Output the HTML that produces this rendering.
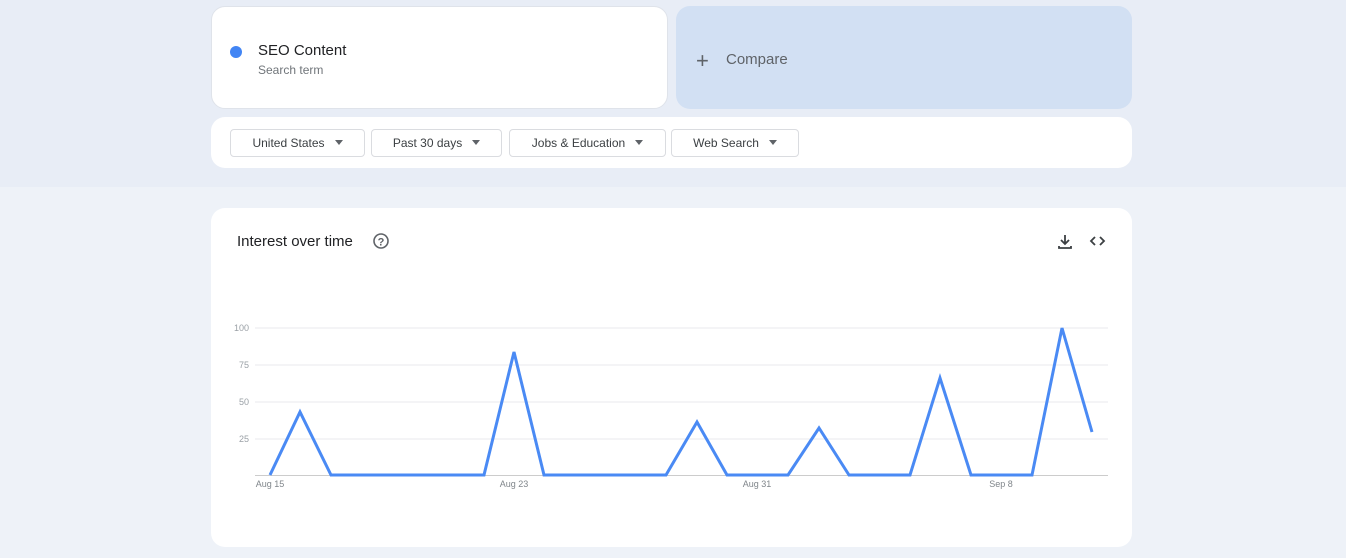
<!DOCTYPE html>
<html><head><style>
body{margin:0;width:1346px;height:558px;background:#eef2f8;font-family:"Liberation Sans",sans-serif;position:relative;overflow:hidden}
.top{position:absolute;left:0;top:0;width:1346px;height:187px;background:#e8edf6}
.card{position:absolute;background:#fff;border-radius:14px}
.btn{position:absolute;top:129px;height:26px;border:1px solid #dadce0;border-radius:4px;background:#fff;font-size:12px;color:#3c4043;line-height:26px;text-align:center}
.btn span{display:inline-block;width:0;height:0;border-left:4px solid transparent;border-right:4px solid transparent;border-top:5px solid #5f6368;margin-left:10px;vertical-align:2px}
</style></head><body>
<div class="top"></div>
<div class="card" style="left:211px;top:6px;width:457px;height:103px;border:1px solid #dfe3ea;box-sizing:border-box"></div>
<div style="position:absolute;left:230px;top:46px;width:12px;height:12px;border-radius:50%;background:#4285f4"></div>
<div style="position:absolute;left:258px;top:42px;font-size:15px;color:#202124">SEO Content</div>
<div style="position:absolute;left:258px;top:63px;font-size:12px;color:#70757a">Search term</div>
<div style="position:absolute;left:676px;top:6px;width:456px;height:103px;border-radius:14px;background:#d2e0f3"></div>
<div style="position:absolute;left:696px;top:48px;font-size:22px;color:#5f6368;font-weight:300">+</div>
<div style="position:absolute;left:726px;top:51px;font-size:15px;color:#5f6368">Compare</div>
<div class="card" style="left:211px;top:117px;width:921px;height:51px"></div>
<div class="btn" style="left:230px;width:133px">United States<span></span></div>
<div class="btn" style="left:371px;width:129px">Past 30 days<span></span></div>
<div class="btn" style="left:509px;width:155px">Jobs &amp; Education<span></span></div>
<div class="btn" style="left:671px;width:126px">Web Search<span></span></div>
<div class="card" style="left:211px;top:208px;width:921px;height:339px"></div>
<div style="position:absolute;left:237px;top:233px;font-size:15px;color:#202124">Interest over time</div>
<svg style="position:absolute;left:0;top:0" width="1346" height="558">
<circle cx="381" cy="241" r="7" fill="none" stroke="#5f6368" stroke-width="1.6"/>
<text x="381" y="245.5" font-size="11" font-weight="bold" fill="#5f6368" text-anchor="middle" font-family="Liberation Sans">?</text>
<path d="M1065 235v9M1061 240l4 4 4-4M1059 246v2h12v-2" fill="none" stroke="#3c4043" stroke-width="1.8"/>
<path d="M1095 237l-4 4 4 4M1100 237l4 4-4 4" fill="none" stroke="#3c4043" stroke-width="1.8"/>
<g stroke="#e8eaed" stroke-width="1"><line x1="255" y1="328" x2="1108" y2="328"/><line x1="255" y1="365" x2="1108" y2="365"/><line x1="255" y1="402" x2="1108" y2="402"/><line x1="255" y1="439" x2="1108" y2="439"/></g>
<line x1="255" y1="475.5" x2="1108" y2="475.5" stroke="#ccc"/>
<g font-size="9" fill="#9aa0a6" font-family="Liberation Sans" text-anchor="end"><text x="249" y="331">100</text><text x="249" y="368">75</text><text x="249" y="405">50</text><text x="249" y="442">25</text></g>
<g font-size="9" fill="#80868b" font-family="Liberation Sans" text-anchor="middle"><text x="270" y="487">Aug 15</text><text x="514" y="487">Aug 23</text><text x="757" y="487">Aug 31</text><text x="1001" y="487">Sep 8</text></g>
<polyline fill="none" stroke="#4a8af4" stroke-width="3" stroke-linejoin="miter" points="270,475 300,412 331,475 484,475 514,352 544,475 666,475 697,422 727,475 788,475 819,428 849,475 910,475 940,378 971,475 1032,475 1062,328 1092,432"/>
</svg>
</body></html>
